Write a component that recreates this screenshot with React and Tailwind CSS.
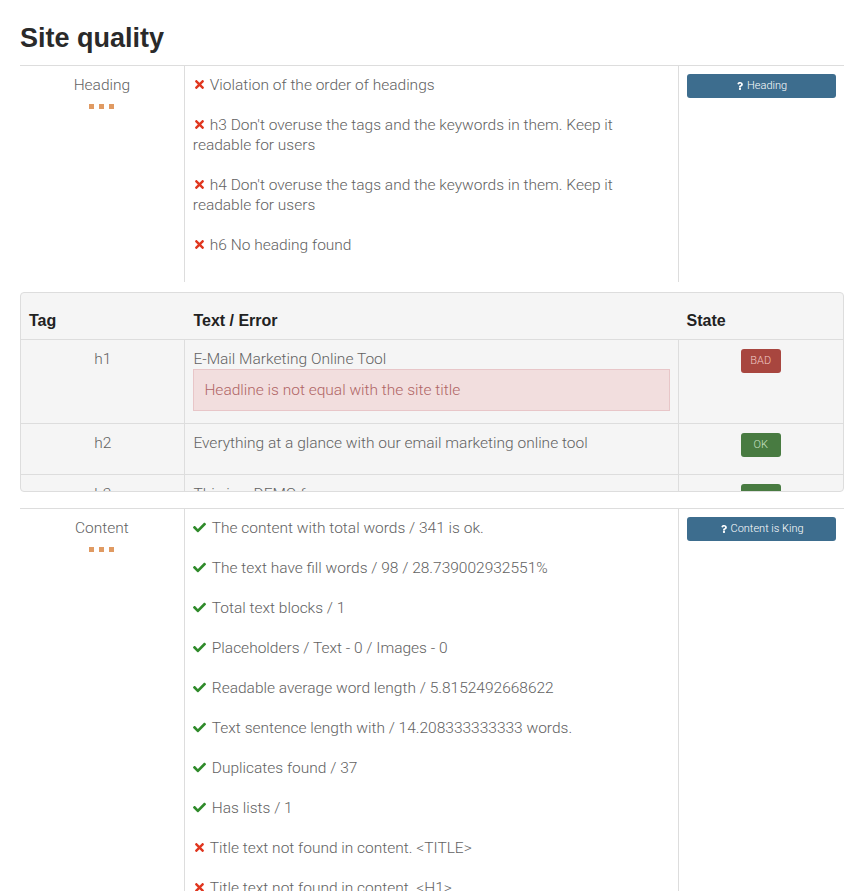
import { FaCheck, FaTimes, FaQuestion } from "react-icons/fa";

const headingChecks = [
  { ok: false, text: "Violation of the order of headings" },
  { ok: false, text: "h3 Don't overuse the tags and the keywords in them. Keep it readable for users" },
  { ok: false, text: "h4 Don't overuse the tags and the keywords in them. Keep it readable for users" },
  { ok: false, text: "h6 No heading found" },
];

const headingRows = [
  { tag: "h1", text: "E-Mail Marketing Online Tool", error: "Headline is not equal with the site title", state: "BAD" },
  { tag: "h2", text: "Everything at a glance with our email marketing online tool", state: "OK" },
  { tag: "h3", text: "This is a DEMO form", state: "OK" },
  { tag: "h3", text: "Newsletter registration", state: "OK" },
];

const contentChecks = [
  { ok: true, text: "The content with total words / 341 is ok." },
  { ok: true, text: "The text have fill words / 98 / 28.739002932551%" },
  { ok: true, text: "Total text blocks / 1" },
  { ok: true, text: "Placeholders / Text - 0 / Images - 0" },
  { ok: true, text: "Readable average word length / 5.8152492668622" },
  { ok: true, text: "Text sentence length with / 14.208333333333 words." },
  { ok: true, text: "Duplicates found / 37" },
  { ok: true, text: "Has lists / 1" },
  { ok: false, text: "Title text not found in content. <TITLE>" },
  { ok: false, text: "Title text not found in content. <H1>" },
  { ok: false, text: "Description text not found in content." },
];

function Check({ ok, text }) {
  return (
    <p className="mb-5 leading-5">
      {ok ? (
        <FaCheck className="inline-block text-[#2f8a2a] text-[13px] mr-[6px] -mt-[3px]" />
      ) : (
        <FaTimes className="inline-block text-[#e0361f] text-[13px] mr-[4px] -mt-[3px]" />
      )}
      {text}
    </p>
  );
}

function Dots() {
  return (
    <div className="flex justify-center gap-[5px] mt-[9px]">
      <span className="w-[5px] h-[5px] bg-[#e09a62]" />
      <span className="w-[5px] h-[5px] bg-[#e09a62]" />
      <span className="w-[5px] h-[5px] bg-[#e09a62]" />
    </div>
  );
}

function Section({ title, help, children }) {
  return (
    <div className="grid grid-cols-[1fr_3fr_1fr] border-t border-[#dddddd]">
      <div className="pt-[9px] text-center border-r border-[#dddddd]">
        <div className="leading-5">{title}</div>
        <Dots />
      </div>
      <div className="pt-[9px] pb-[7px] px-2 border-r border-[#dddddd]">{children}</div>
      <div className="pt-[8px] px-2">
        <button className="w-full h-6 rounded-[3px] bg-[#3d6d8e] text-white text-[11px] flex items-center justify-center gap-[3px]">
          <FaQuestion className="text-[8px]" />
          {help}
        </button>
      </div>
    </div>
  );
}

function Badge({ state }) {
  const bad = state === "BAD";
  return (
    <span
      className={`inline-flex items-center justify-center w-10 h-6 rounded-[3px] text-[11px] ${
        bad ? "bg-[#a8463f] text-[#f0c8c4]" : "bg-[#487b41] text-[#c8e0c4]"
      }`}
    >
      {state}
    </span>
  );
}

export default function App() {
  return (
    <div className="min-h-screen bg-white px-5 text-[15.5px] font-light text-[#626262] font-['Roboto',sans-serif]">
      <h1 className="pt-[21px] pb-[10px] text-[27px] leading-[34px] font-bold text-[#2a2a2a] font-['Liberation_Sans',sans-serif]">
        Site quality
      </h1>

      <Section title="Heading" help="Heading">
        {headingChecks.map((c, i) => (
          <Check key={i} {...c} />
        ))}
      </Section>

      <div className="mt-[10px] mb-4 h-[200px] overflow-hidden rounded border border-[#dddddd] bg-[#f5f5f5]">
        <div className="grid grid-cols-[1fr_3fr_1fr] h-[47px] items-end pb-2 border-b border-[#dddddd] font-bold text-[16px] text-[#222222] font-['Liberation_Sans',sans-serif]">
          <div className="px-2 leading-5">Tag</div>
          <div className="px-2 leading-5">Text / Error</div>
          <div className="px-2 leading-5">State</div>
        </div>
        {headingRows.map((r, i) => (
          <div key={i} className="grid grid-cols-[1fr_3fr_1fr] border-b border-[#dddddd]">
            <div className="pt-[9px] text-center border-r border-[#dddddd] leading-5">{r.tag}</div>
            <div className="pt-[9px] pb-[21px] px-2 border-r border-[#dddddd]">
              <div className="leading-5">{r.text}</div>
              {r.error && (
                <div className="-mb-[9px] px-[10px] py-[10px] leading-5 border border-[#e8c6c8] bg-[#f2dede] text-[#b06565]">
                  {r.error}
                </div>
              )}
            </div>
            <div className="pt-2 text-center">
              <Badge state={r.state} />
            </div>
          </div>
        ))}
      </div>

      <Section title="Content" help="Content is King">
        {contentChecks.map((c, i) => (
          <Check key={i} {...c} />
        ))}
      </Section>
    </div>
  );
}
